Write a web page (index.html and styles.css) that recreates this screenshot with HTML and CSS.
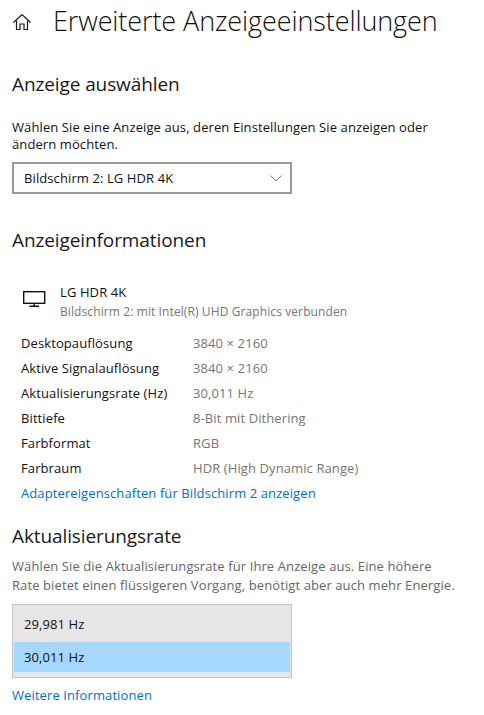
FILE: index.html
```html
<!DOCTYPE html>
<html lang="de">
<head>
    <meta charset="UTF-8">
    <meta name="viewport" content="width=device-width, initial-scale=1.0">
    <title>Erweiterte Anzeigeeinstellungen</title>
    <link rel="stylesheet" href="styles.css">
</head>
<body>
    <header class="page-header">
        <svg class="home-icon" width="20" height="20" viewBox="0 0 20 20" fill="none" stroke="#1a1a1a" stroke-width="1.2">
            <path d="M1.5 10.5 L10 2.5 L18.5 10.5"/>
            <path d="M4.5 8.5 V17.5 H8 V12 H12 V17.5 H15.5 V8.5"/>
        </svg>
        <h1>Erweiterte Anzeigeeinstellungen</h1>
    </header>

    <section class="select-section">
        <h2>Anzeige auswählen</h2>
        <p class="intro">Wählen Sie eine Anzeige aus, deren Einstellungen Sie anzeigen oder ändern möchten.</p>
        <div class="dropdown">
            <span>Bildschirm 2: LG HDR 4K</span>
            <svg width="12" height="7" viewBox="0 0 12 7" fill="none" stroke="#777" stroke-width="1">
                <path d="M0.5 0.5 L6 6 L11.5 0.5"/>
            </svg>
        </div>
    </section>

    <section class="info-section">
        <h2>Anzeigeinformationen</h2>
        <div class="device">
            <svg class="monitor-icon" width="26" height="18" viewBox="0 0 26 18" fill="none" stroke="#111" stroke-width="1.4">
                <rect x="1.7" y="1.7" width="21" height="11.6"/>
                <path d="M12.2 13 V16 M7.5 16.3 H17"/>
            </svg>
            <div>
                <div class="device-name">LG HDR 4K</div>
                <div class="device-sub">Bildschirm 2: mit Intel(R) UHD Graphics verbunden</div>
            </div>
        </div>
        <dl class="info-table">
            <dt>Desktopauflösung</dt><dd>3840 × 2160</dd>
            <dt>Aktive Signalauflösung</dt><dd>3840 × 2160</dd>
            <dt>Aktualisierungsrate (Hz)</dt><dd>30,011 Hz</dd>
            <dt>Bittiefe</dt><dd>8-Bit mit Dithering</dd>
            <dt>Farbformat</dt><dd>RGB</dd>
            <dt>Farbraum</dt><dd>HDR (High Dynamic Range)</dd>
        </dl>
        <a class="link adapter-link" href="#">Adaptereigenschaften für Bildschirm 2 anzeigen</a>
    </section>

    <section class="rate-section">
        <h2>Aktualisierungsrate</h2>
        <p class="rate-text">Wählen Sie die Aktualisierungsrate für Ihre Anzeige aus. Eine höhere Rate bietet einen flüssigeren Vorgang, benötigt aber auch mehr Energie.</p>
        <ul class="rate-list">
            <li>29,981 Hz</li>
            <li class="selected">30,011 Hz</li>
        </ul>
        <a class="link" href="#">Weitere Informationen</a>
    </section>
</body>
</html>
```

FILE: styles.css
```css
body {
    font-family: "Open Sans", "Noto Sans", sans-serif;
    font-size: 13px;
    letter-spacing: 0.1px;
    color: #111;
    background-color: #fff;
    margin: 0;
    padding: 0 14px 0 12px;
    overflow: hidden;
}
h1 {
    font-size: 27px;
    font-weight: 300;
    letter-spacing: -0.1px;
    line-height: 36px;
    margin: 0;
    color: #111;
    white-space: nowrap;
}
h2 {
    font-size: 19px;
    font-weight: 400;
    letter-spacing: -0.1px;
    line-height: 26px;
    margin: 0;
    color: #1a1a1a;
}
.page-header {
    display: flex;
    align-items: center;
    gap: 21px;
    padding-top: 3px;
    height: 36px;
}
.home-icon {
    flex: none;
    margin-top: 2px;
}
.select-section {
    margin-top: 32px;
}
.intro {
    margin: 22px 0 0;
    line-height: 17px;
}
.dropdown {
    box-sizing: border-box;
    width: 280px;
    height: 32px;
    margin-top: 9px;
    padding: 0 8px 0 10px;
    border: 2px solid #999;
    display: flex;
    align-items: center;
    justify-content: space-between;
}
.info-section {
    margin-top: 33px;
}
.device {
    display: flex;
    gap: 12px;
    margin: 29px 0 0 10px;
}
.monitor-icon {
    flex: none;
    margin-top: 8px;
}
.device-name {
    line-height: 20px;
}
.device-sub {
    font-size: 12px;
    line-height: 19px;
    color: #767676;
}
.info-table {
    display: grid;
    grid-template-columns: 172px 1fr;
    grid-auto-rows: 25px;
    align-items: center;
    margin: 9px 0 0 9px;
}
.info-table dd {
    margin: 0;
    color: #767676;
}
.link {
    color: #0070c8;
    text-decoration: none;
}
.adapter-link {
    display: block;
    margin: 1px 0 0 9px;
    line-height: 25px;
}
.rate-section {
    margin-top: 17px;
}
.rate-text {
    max-width: 450px;
    margin: 8px 0 0;
    line-height: 19px;
    color: #666;
}
.rate-list {
    box-sizing: border-box;
    width: 280px;
    height: 74px;
    list-style: none;
    margin: 9px 0 0;
    padding: 1px 1px 5px;
    border: 1px solid #c4c4c4;
    background-color: #e6e6e6;
}
.rate-list li {
    height: 30px;
    line-height: 30px;
    padding-left: 10px;
}
.rate-list li:first-child {
    height: 36px;
    line-height: 36px;
}
.rate-list .selected {
    background-color: #a6d8ff;
}
.rate-section .link {
    display: block;
    margin-top: 7px;
    line-height: 20px;
}
```
